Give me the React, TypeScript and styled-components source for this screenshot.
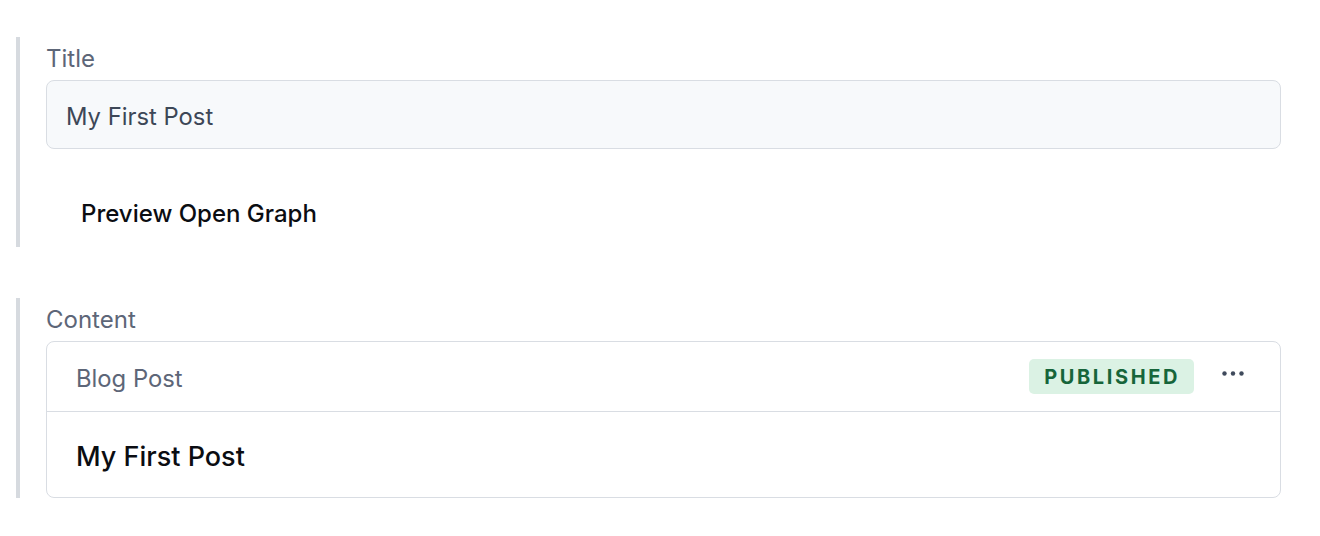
import React from "react";
import styled, { createGlobalStyle } from "styled-components";

const Global = createGlobalStyle`
  html, body { margin: 0; padding: 0; background: #ffffff; }
  body { font-family: Inter, "Noto Sans", "Liberation Sans", sans-serif; -webkit-font-smoothing: antialiased; }
  * { box-sizing: border-box; }
`;

const Page = styled.div`
  padding: 37px 39px 0 16px;
  display: flex;
  flex-direction: column;
  gap: 51px;
`;

const Field = styled.section`
  border-left: 4px solid #d6dadf;
  padding: 7px 0 0 26px;
  display: flex;
  flex-direction: column;
`;

const Label = styled.label`
  font-size: 24px;
  line-height: 30px;
  color: #5d6678;
  margin-bottom: 6px;
`;

const Input = styled.div`
  height: 69px;
  border: 1px solid #d9dde3;
  border-radius: 8px;
  background: #f7f9fb;
  display: flex;
  align-items: center;
  padding: 3px 19px 0;
  font-size: 23.8px;
  color: #3d4757;
`;

const LinkButton = styled.button`
  align-self: flex-start;
  margin-top: 42px;
  margin-bottom: 12px;
  height: 44px;
  padding: 0 0 0 35px;
  border: none;
  background: transparent;
  font-family: inherit;
  font-size: 24px;
  font-weight: 500;
  color: #0b0d12;
  cursor: pointer;
`;

const Card = styled.div`
  border: 1px solid #d9dde3;
  border-radius: 8px;
  background: #fff;
`;

const CardHeader = styled.div`
  height: 70px;
  display: flex;
  align-items: center;
  padding: 0 35px 0 29px;
  border-bottom: 1px solid #d9dde3;
`;

const CardTitle = styled.span`
  flex: 1;
  font-size: 23.8px;
  color: #5d6678;
  padding-top: 3px;
`;

const Badge = styled.span`
  height: 35px;
  display: inline-flex;
  align-items: center;
  padding: 1px 14px 0 15px;
  border-radius: 5px;
  background: #dbf2e4;
  color: #16653a;
  font-size: 20px;
  font-weight: 700;
  letter-spacing: 2.6px;
`;

const MoreButton = styled.button`
  margin-left: 27px;
  width: 24px;
  height: 24px;
  padding: 0;
  border: none;
  background: transparent;
  display: flex;
  align-items: center;
  justify-content: center;
  cursor: pointer;
  transform: translateY(-3px);
`;

const CardBody = styled.div`
  height: 85px;
  display: flex;
  align-items: center;
  padding: 3px 29px 0;
  font-size: 27px;
  font-weight: 500;
  color: #0b0d12;
`;

export default function App() {
  return (
    <>
      <Global />
      <Page>
        <Field>
          <Label>Title</Label>
          <Input>My First Post</Input>
          <LinkButton>Preview Open Graph</LinkButton>
        </Field>
        <Field>
          <Label>Content</Label>
          <Card>
            <CardHeader>
              <CardTitle>Blog Post</CardTitle>
              <Badge>PUBLISHED</Badge>
              <MoreButton aria-label="More">
                <svg width="22" height="5" viewBox="0 0 22 5">
                  <circle cx="2.5" cy="2.5" r="2.2" fill="#3f4a5c" />
                  <circle cx="11" cy="2.5" r="2.2" fill="#3f4a5c" />
                  <circle cx="19.5" cy="2.5" r="2.2" fill="#3f4a5c" />
                </svg>
              </MoreButton>
            </CardHeader>
            <CardBody>My First Post</CardBody>
          </Card>
        </Field>
      </Page>
    </>
  );
}
